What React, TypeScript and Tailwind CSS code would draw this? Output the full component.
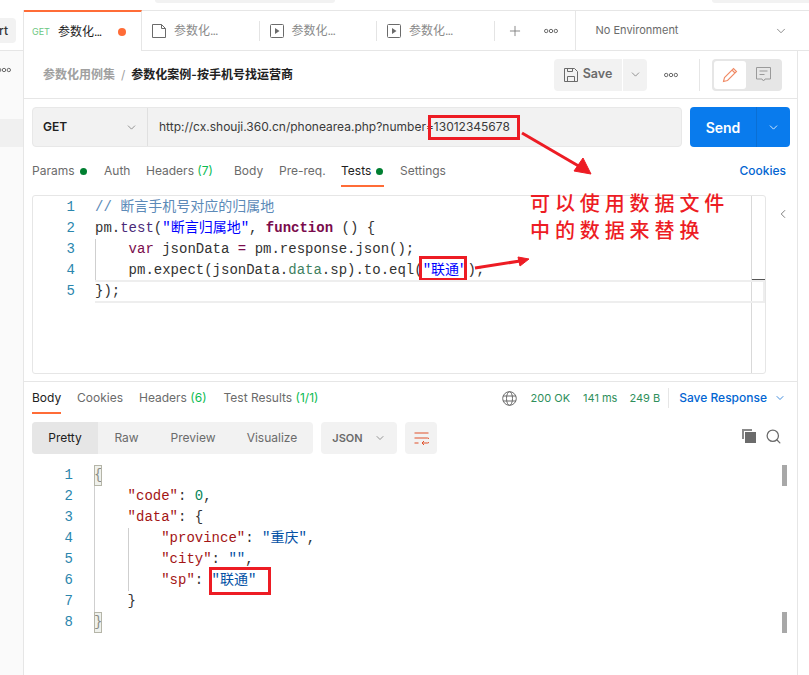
import React from "react";
import { ChevronDown, ChevronLeft, Plus, Search } from "lucide-react";

const UI = "font-['Inter','Noto_Sans_CJK_SC',sans-serif]";
const MONO = "font-['Liberation_Mono','Noto_Sans_CJK_SC',monospace]";

function Dots({ className = "" }: { className?: string }) {
  return (
    <svg width="14" height="6" viewBox="0 0 14 6" fill="none" stroke="#6b6b6b" className={className}>
      <circle cx="2.2" cy="3" r="1.7" />
      <circle cx="7" cy="3" r="1.7" />
      <circle cx="11.8" cy="3" r="1.7" />
    </svg>
  );
}

function RunnerIcon() {
  return (
    <svg width="14" height="14" viewBox="0 0 14 14" fill="none" className="shrink-0">
      <rect x="0.5" y="0.5" width="13" height="13" rx="1" stroke="#6b6b6b" />
      <path d="M5 4l4.5 3L5 10z" fill="#6b6b6b" />
    </svg>
  );
}

function TabName({ color }: { color: string }) {
  return (
    <span className={`text-[12px] ${color}`}>
      参数化<span className="tracking-[-1px]">...</span>
    </span>
  );
}

function Tab({ icon, divider = true }: { icon: React.ReactNode; divider?: boolean }) {
  return (
    <div className="relative flex h-full w-[117.5px] items-center gap-[8px] pl-[10px]">
      {icon}
      <TabName color="text-[#8a8a8a]" />
      {divider && <span className="absolute right-0 top-[10px] h-[20px] w-px bg-[#e4e4e4]" />}
    </div>
  );
}

function TopBar() {
  return (
    <div className="flex h-[41px] shrink-0 border-y border-[#e6e6e6] bg-white">
      <div className="-mt-px flex h-[41px] w-[118px] items-center border-r border-t-2 border-[#e6e6e6] border-t-[#ff6c37] bg-white pl-[8px]">
        <span className="mr-[8px] text-[9px] text-[#6cc783]">GET</span>
        <TabName color="text-[#212121]" />
        <span className="ml-[17px] h-[8px] w-[8px] rounded-full bg-[#ff6c37]" />
      </div>
      <Tab
        icon={
          <svg width="14" height="14" viewBox="0 0 14 14" fill="none" stroke="#6b6b6b" className="shrink-0">
            <path d="M0.5 0.5h9l4 4v9h-13zM9.5 0.5v4h4" />
          </svg>
        }
      />
      <Tab icon={<RunnerIcon />} />
      <Tab icon={<RunnerIcon />} />
      <div className="flex w-[80px] items-center">
        <Plus size={16} strokeWidth={1.3} className="ml-[12px] text-[#7a7a7a]" />
        <Dots className="ml-[21px]" />
      </div>
      <div className="flex flex-1 items-center justify-between border-l border-[#e6e6e6] pl-[20px] pr-[21px]">
        <span className="text-[11px] text-[#6b6b6b]">No Environment</span>
        <ChevronDown size={14} strokeWidth={1.3} className="text-[#6b6b6b]" />
      </div>
    </div>
  );
}

function Breadcrumb() {
  return (
    <div className="flex h-[48px] shrink-0 items-center border-b border-[#e6e6e6] pl-[19px] pr-[15px]">
      <span className="text-[12px] font-semibold text-[#a0a0a0]">参数化用例集</span>
      <span className="mx-[6px] text-[12px] text-[#a0a0a0]">/</span>
      <span className="text-[12px] font-semibold text-[#212121]">参数化案例-按手机号找运营商</span>
      <div className="ml-auto flex h-[32px] items-center">
        <div className="flex h-full w-[68px] items-center justify-center gap-[5px] rounded-l-[4px] bg-[#f2f2f2]">
          <svg width="14" height="14" viewBox="0 0 14 14" fill="none" stroke="#6b6b6b">
            <path d="M0.5 0.5h10l3 3v10h-13zM3.5 13.5v-5h7v5M3.5 0.5v3h5v-3" />
          </svg>
          <span className="text-[12.5px] font-semibold text-[#6b6b6b]">Save</span>
        </div>
        <div className="ml-px flex h-full w-[24px] items-center justify-center rounded-r-[4px] bg-[#f2f2f2]">
          <ChevronDown size={13} strokeWidth={1.3} className="text-[#6b6b6b]" />
        </div>
        <Dots className="ml-[17px]" />
        <span className="ml-[21px] h-[32px] w-px bg-[#e6e6e6]" />
        <div className="ml-[12px] flex h-full w-[70px] items-center rounded-[4px] bg-[#e6e6e6] p-[2px]">
          <div className="flex h-[28px] w-[32px] items-center justify-center rounded-[3px] bg-white">
            <svg width="16" height="16" viewBox="0 0 16 16" fill="none" stroke="#f08a65" strokeWidth="1.1">
              <path d="M1.5 14.5l1-4L11.5 1.5l3 3-9 9zM10 3l3 3" />
            </svg>
          </div>
          <div className="flex flex-1 items-center justify-center">
            <svg width="15" height="15" viewBox="0 0 15 15" fill="none" stroke="#9a9a9a">
              <path d="M0.5 0.5h14v11.5h-5.5l-1.5 2-1.5-2h-5.5zM3.5 4h8M3.5 7.5h5" />
            </svg>
          </div>
        </div>
      </div>
    </div>
  );
}

function UrlBar() {
  return (
    <div className="mt-[8px] flex h-[40px] shrink-0 pl-[8px] pr-[7px]">
      <div className="flex flex-1 rounded-[4px] border border-[#e8e8e8] bg-[#f2f2f2]">
        <div className="flex w-[115px] items-center justify-between border-r border-[#e0e0e0] pl-[10px] pr-[9px]">
          <span className="text-[12px] font-semibold text-[#212121]">GET</span>
          <ChevronDown size={13} strokeWidth={1.3} className="text-[#6b6b6b]" />
        </div>
        <div className="flex items-center pl-[11px] text-[12px] text-[#3a3a3a]">
          http://cx.shouji.360.cn/phonearea.php?number=13012345678
        </div>
      </div>
      <div className="ml-[8px] flex w-[100px] rounded-[4px] bg-[#097bed] text-white">
        <div className="flex w-[67px] items-center justify-center border-r border-[#0a6fd4] text-[14px] font-semibold">Send</div>
        <div className="flex flex-1 items-center justify-center">
          <ChevronDown size={13} strokeWidth={1.5} />
        </div>
      </div>
    </div>
  );
}

function Dot() {
  return <span className="ml-[5px] inline-block h-[7px] w-[7px] rounded-full bg-[#007f31]" />;
}

function RequestTabs() {
  return (
    <div className="mt-[13px] flex h-[27px] shrink-0 items-start pl-[8px] pr-[11px] text-[12px] leading-[22px] text-[#6b6b6b]">
      <span className="w-[72px] whitespace-nowrap">Params<Dot /></span>
      <span className="w-[42px]">Auth</span>
      <span className="w-[88px] whitespace-nowrap">Headers <span className="text-[#0cbb52]">(7)</span></span>
      <span className="w-[45px]">Body</span>
      <span className="w-[62px] whitespace-nowrap">Pre-req.</span>
      <span className="h-[27px] w-[43px] whitespace-nowrap border-b-2 border-[#ff6c37] text-[#212121]">Tests<Dot /></span>
      <span className="ml-[16px]">Settings</span>
      <span className="ml-auto font-medium text-[#0265d2]">Cookies</span>
    </div>
  );
}

type Seg = [string, string?];

const C = {
  plain: "text-[#333333]",
  fn: "text-[#4a2a78]",
  str: "text-[#0000ff]",
  kw: "font-bold text-[#7a0b4c]",
  cmt: "text-[#5c8ab8]",
  key: "text-[#a31515]",
  val: "text-[#0451a5]",
  num: "text-[#098658]",
  var: "text-[#7a0b4c]",
  prop: "text-[#3f7f5f]",
};

function CodeLine({ n, segs, indent = 0, gutter, active = false }: { n: number; segs: Seg[]; indent?: number; gutter: string; active?: boolean }) {
  return (
    <div className={`${MONO} flex h-[21px] text-[14px] leading-[21px] whitespace-pre`}>
      <span className={`${gutter} shrink-0 text-right text-[#2b86ad]`}>{n}</span>
      <div className={`relative flex-1 ${active ? "z-10 -my-px -mr-[14px] border-2 border-l-0 border-[#eeeeee] leading-[19px]" : ""}`}>
        {Array.from({ length: indent }).map((_, i) => (
          <span key={i} className="absolute top-0 h-[21px] w-px bg-[#cfcfcf]" style={{ left: i * 33.6 }} />
        ))}
        <span style={{ paddingLeft: indent * 33.6 }}>
          {segs.map(([t, c], i) => (
            <span key={i} className={c ?? C.plain}>{t}</span>
          ))}
        </span>
      </div>
    </div>
  );
}

const EDITOR_GUTTER = "w-[42px] mr-[20px]";
const BODY_GUTTER = "w-[49px] mr-[21px]";

function TestsEditor() {
  return (
    <div className="ml-[8px] mr-[31px] flex h-[179px] shrink-0 rounded-[3px] border border-[#e6e6e6]">
      <div className="relative flex-1 pt-[1px]">
        <CodeLine gutter={EDITOR_GUTTER} n={1} segs={[["// 断言手机号对应的归属地", C.cmt]]} />
        <CodeLine gutter={EDITOR_GUTTER} n={2} segs={[["pm."], ["test", C.fn], ["("], ['"断言归属地"', C.str], [", "], ["function", C.kw], [" () {"]]} />
        <CodeLine gutter={EDITOR_GUTTER} n={3} indent={1} segs={[["var", C.var], [" jsonData "], ["=", C.var], [" pm.response.json();"]]} />
        <CodeLine gutter={EDITOR_GUTTER} n={4} indent={1} segs={[["pm.expect(jsonData."], ["data", C.prop], [".sp).to.eql("], ['"联通"', C.str], [");"]]} />
        <CodeLine gutter={EDITOR_GUTTER} n={5} active segs={[["});"]]} />
      </div>
      <div className="relative w-[14px] border-l border-[#d9d9d9]">
        <span className="absolute left-0 top-[83px] h-[2px] w-[13px] bg-[#555555]" />
      </div>
    </div>
  );
}

function ResponseHeader() {
  return (
    <div className="mt-[7px] flex h-[33px] shrink-0 items-start border-t border-[#e6e6e6] pl-[8px] pr-[11px] pt-[5px] text-[12px] leading-[22px] text-[#6b6b6b]">
      <span className="h-[27px] w-[29px] border-b-2 border-[#ff6c37] text-[#212121]">Body</span>
      <span className="ml-[16px]">Cookies</span>
      <span className="ml-[16px]">Headers <span className="text-[#0cbb52]">(6)</span></span>
      <span className="ml-[17px]">Test Results <span className="text-[#0cbb52]">(1/1)</span></span>
      <div className="ml-auto flex h-[22px] items-center">
        <svg width="15" height="15" viewBox="0 0 15 15" fill="none" stroke="#6b6b6b">
          <circle cx="7.5" cy="7.5" r="6.8" />
          <ellipse cx="7.5" cy="7.5" rx="3" ry="6.8" />
          <path d="M1 5h13M1 10h13" />
        </svg>
        <span className="ml-[14px] text-[11px] text-[#2f8f5b]">200 OK</span>
        <span className="ml-[13px] text-[11px] text-[#2f8f5b]">141 ms</span>
        <span className="ml-[12px] text-[11px] text-[#2f8f5b]">249 B</span>
        <span className="ml-[8px] h-[20px] w-px bg-[#e6e6e6]" />
        <span className="ml-[10px] font-medium text-[#0265d2]">Save Response</span>
        <ChevronDown size={12} strokeWidth={1.5} className="ml-[7px] text-[#0265d2]" />
      </div>
    </div>
  );
}

function ResponseToolbar() {
  return (
    <div className="mt-[8px] flex h-[32px] shrink-0 items-center pl-[8px] pr-[15px] text-[12px] text-[#6b6b6b]">
      <div className="flex h-full w-[281px] overflow-hidden rounded-[4px] bg-[#f2f2f2]">
        <span className="flex w-[66px] items-center justify-center bg-[#e6e6e6] text-[#212121]">Pretty</span>
        <span className="flex w-[57px] items-center justify-center">Raw</span>
        <span className="flex w-[76px] items-center justify-center">Preview</span>
        <span className="flex w-[82px] items-center justify-center">Visualize</span>
      </div>
      <div className="ml-[8px] flex h-full w-[76px] items-center justify-center gap-[11px] rounded-[4px] bg-[#f2f2f2] text-[11px] font-semibold">
        JSON
        <ChevronDown size={12} strokeWidth={1.4} />
      </div>
      <div className="ml-[8px] flex h-full w-[32px] items-center justify-center rounded-[4px] bg-[#f2f2f2]">
        <svg width="15" height="13" viewBox="0 0 15 13" fill="none" stroke="#e0502a">
          <path d="M0.5 1h14M0.5 6h13a1.8 1.8 0 0 1 0 5H8M10 9l-2 2 2 2M0.5 11h4" />
        </svg>
      </div>
      <div className="-mt-[4px] ml-auto flex items-center gap-[9px]">
        <svg width="14" height="14" viewBox="0 0 14 14">
          <path d="M0 0h10v2H2v8H0z" fill="#8a8a8a" />
          <rect x="3" y="3" width="11" height="11" fill="#6b6b6b" />
        </svg>
        <Search size={17} strokeWidth={1.8} className="text-[#6b6b6b]" />
      </div>
    </div>
  );
}

function ResponseBody() {
  return (
    <div className="relative mt-[11px] flex-1 pr-[11px]">
      <CodeLine gutter={BODY_GUTTER} n={1} segs={[["{"]]} />
      <CodeLine gutter={BODY_GUTTER} n={2} indent={1} segs={[['"code"', C.key], [": "], ["0", C.num], [","]]} />
      <CodeLine gutter={BODY_GUTTER} n={3} indent={1} segs={[['"data"', C.key], [": {"]]} />
      <CodeLine gutter={BODY_GUTTER} n={4} indent={2} segs={[['"province"', C.key], [": "], ['"重庆"', C.val], [","]]} />
      <CodeLine gutter={BODY_GUTTER} n={5} indent={2} segs={[['"city"', C.key], [": "], ['""', C.val], [","]]} />
      <CodeLine gutter={BODY_GUTTER} n={6} indent={2} segs={[['"sp"', C.key], [": "], ['"联通"', C.val]]} />
      <CodeLine gutter={BODY_GUTTER} n={7} indent={1} segs={[["}"]]} />
      <CodeLine gutter={BODY_GUTTER} n={8} segs={[["}"]]} />
      <span className="absolute left-[70px] top-0 h-[21px] w-[8px] border border-[#b5b5a8] bg-[#dfe3da]/50" />
      <span className="absolute left-[70px] top-[147px] h-[21px] w-[8px] border border-[#b5b5a8] bg-[#dfe3da]/50" />
      <span className="absolute right-[10px] top-0 h-[21px] w-[5px] bg-[#a8a8a8]" />
      <span className="absolute right-[10px] top-[147px] h-[21px] w-[5px] bg-[#a8a8a8]" />
    </div>
  );
}

function Annotations() {
  return (
    <>
      <span className="absolute left-[428px] top-[115px] h-[25px] w-[92px] border-[3px] border-[#ed1c24]" />
      <span className="absolute left-[419px] top-[256px] h-[25px] w-[48px] border-[3px] border-[#ed1c24]" />
      <span className="absolute left-[209px] top-[567px] h-[28px] w-[62px] border-[3px] border-[#ed1c24]" />
      <svg width="809" height="675" className="pointer-events-none absolute left-0 top-0" fill="#ed1c24" stroke="#ed1c24">
        <path d="M522 133L582 168" strokeWidth="3" />
        <path d="M591 174L574 171L583 158z" />
        <path d="M475 268L520 261" strokeWidth="3" />
        <path d="M529 259L518 257L520 266z" />
      </svg>
      <div className="absolute left-[530px] top-[190px] font-['Noto_Sans_CJK_SC',serif] text-[20px] font-medium leading-[26.5px] tracking-[4.9px] text-[#ed1c24]">
        <div>可以使用数据文件</div>
        <div>中的数据来替换</div>
      </div>
    </>
  );
}

export default function App() {
  return (
    <div className={`${UI} relative flex h-[675px] w-[809px] flex-col overflow-hidden bg-white`}>
      {/* top strip of the app window */}
      <div className="relative h-[10px] shrink-0">
        <span className="absolute left-[155px] top-0 h-[3px] w-[180px] rounded-b-[4px] bg-[#f2f2f2]" />
        <span className="absolute left-[712px] top-0 h-[3px] w-[97px] rounded-bl-[4px] bg-[#f2f2f2]" />
      </div>
      <div className="flex min-h-0 flex-1">
        {/* sidebar */}
        <aside className="flex w-[24px] shrink-0 flex-col border-r border-[#e6e6e6] bg-[#fafafa]">
          <div className="h-[41px] border-b border-[#e6e6e6] bg-white">
            <div className="-ml-[12px] mt-[8px] flex h-[25px] w-[28px] items-center justify-end rounded-[4px] bg-[#f2f2f2] pr-[8px] text-[12px] font-medium text-[#333333]">rt</div>
          </div>
          <Dots className="-ml-[3px] mt-[16px]" />
          <div className="mt-[46px] h-[28px] bg-[#f0f0f0]" />
        </aside>

        <div className="flex min-w-0 flex-1 flex-col">
          <TopBar />
          <div className="mr-[11px] flex min-h-0 flex-1 flex-col border-r border-[#e6e6e6]">
            <Breadcrumb />
            <UrlBar />
            <RequestTabs />
            <div className="relative mt-[8px] shrink-0">
              <TestsEditor />
              <ChevronLeft size={14} strokeWidth={1.5} className="absolute right-[7px] top-[12px] text-[#6b6b6b]" />
            </div>
            <ResponseHeader />
            <ResponseToolbar />
            <ResponseBody />
          </div>
        </div>
      </div>
      <Annotations />
    </div>
  );
}
